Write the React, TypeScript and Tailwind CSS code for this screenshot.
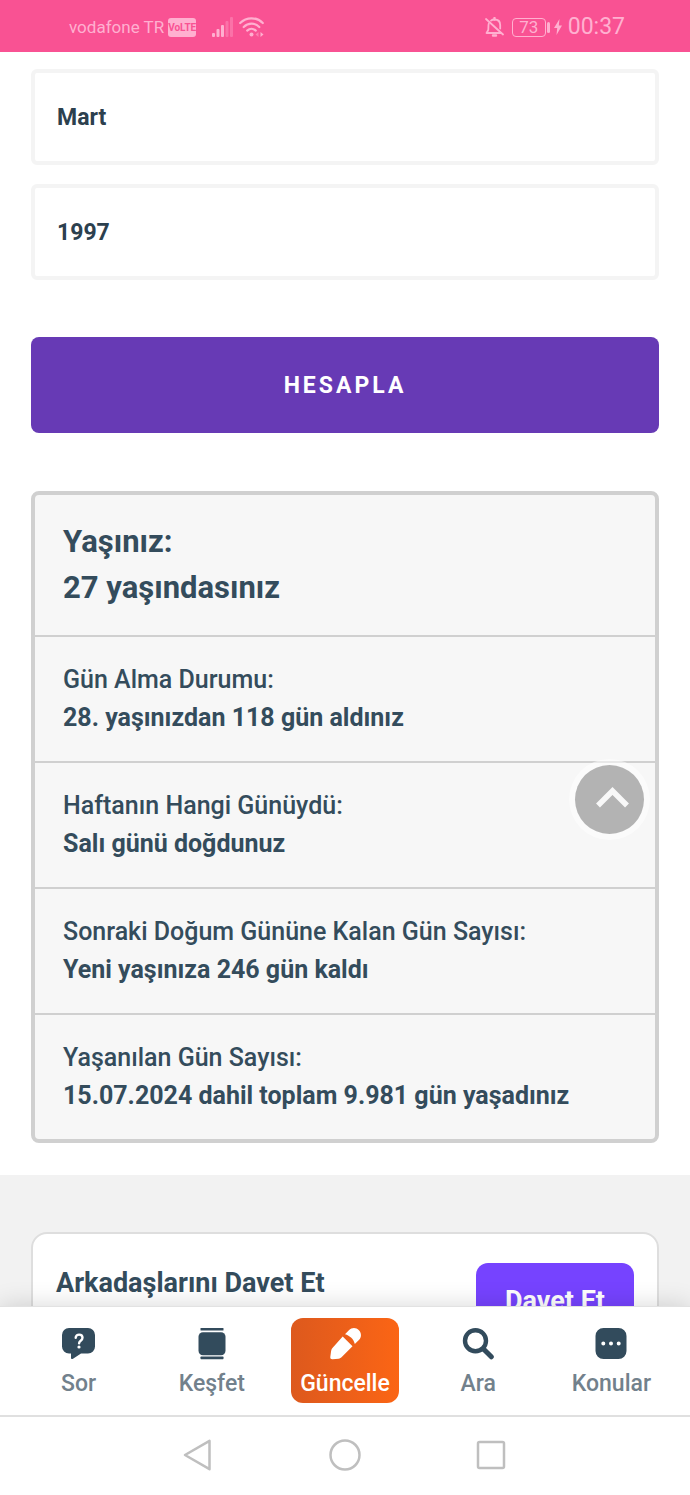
import { ReactNode } from 'react';

const months = ['Ocak', 'Şubat', 'Mart', 'Nisan', 'Mayıs', 'Haziran', 'Temmuz', 'Ağustos', 'Eylül', 'Ekim', 'Kasım', 'Aralık'];
const years = ['1995', '1996', '1997', '1998', '1999'];

const results = [
	{ label: 'Gün Alma Durumu:', value: '28. yaşınızdan 118 gün aldınız' },
	{ label: 'Haftanın Hangi Günüydü:', value: 'Salı günü doğdunuz' },
	{ label: 'Sonraki Doğum Gününe Kalan Gün Sayısı:', value: 'Yeni yaşınıza 246 gün kaldı' },
	{ label: 'Yaşanılan Gün Sayısı:', value: '15.07.2024 dahil toplam 9.981 gün yaşadınız' },
];

function StatusBar() {
	return (
		<header className="flex h-13 shrink-0 items-center justify-between bg-[#f95293] pt-0.5 pl-[69px] pr-[65px] text-[#ffb0d0]">
			<div className="flex items-center">
				<span className="text-[17px] leading-6">vodafone TR</span>
				<span className="ml-1 flex h-[19px] w-7 items-center justify-center rounded-[3px] bg-[#ffb0d0] text-[10px] font-bold text-[#f95293]">
					VoLTE
				</span>
				<svg className="ml-4 h-5 w-[21px]" viewBox="0 0 21 20" fill="currentColor" aria-hidden="true">
					<rect x="0" y="16" width="3" height="4" rx="1" />
					<rect x="4.500" y="12" width="3" height="8" rx="1" />
					<rect x="9" y="8" width="3" height="12" rx="1" />
					<rect x="13.500" y="4" width="3" height="16" rx="1" opacity=".35" />
					<rect x="18" y="0" width="3" height="20" rx="1" opacity=".35" />
				</svg>
				<svg className="ml-1.5 h-5 w-[25px]" viewBox="0 0 25 20" fill="none" stroke="currentColor" strokeWidth="2.200" strokeLinecap="round" aria-hidden="true">
					<path d="M1.200 6C7.500-.3 17.500-.3 23.800 6" />
					<path d="M4.700 10C9.200 5.500 15.800 5.500 20.300 10" />
					<path d="M8.200 13.600c2.600-2.500 6-2.500 8.600 0" />
					<circle cx="12.500" cy="17.500" r="2" fill="currentColor" stroke="none" />
					<path d="M19.500 15v5l-3-2.500z" fill="currentColor" stroke="none" opacity=".5" />
					<path d="M21.500 15v5l3-2.500z" fill="currentColor" stroke="none" />
				</svg>
			</div>
			<div className="flex items-center">
				<svg className="h-5 w-[19px]" viewBox="0 0 19 20" fill="none" stroke="currentColor" strokeWidth="1.800" strokeLinecap="round" strokeLinejoin="round" aria-hidden="true">
					<path d="M1 2l17 15.500" />
					<path d="M3.800 6.500C3 8.500 3.800 12 3 13.600L1.500 16H16" />
					<path d="M6 3.600C7 2.700 8 2.500 9.500 2.500c3.800 0 5.700 2.500 5.700 5.500v3.500" />
					<path d="M9.500 2.500V1M8 18.500h3" strokeWidth="2.400" />
				</svg>
				<span className="ml-2 flex h-[19px] w-[34px] items-center justify-center rounded-[4px] border border-current text-[17px] leading-none">
					73
				</span>
				<span className="ml-px h-[11px] w-[3px] rounded-sm bg-current" />
				<svg className="ml-1 h-4 w-2" viewBox="0 0 8 16" fill="currentColor" aria-hidden="true">
					<path d="M5.500 0L0 9h3.200L2.500 16 8 6.500H4.800z" />
				</svg>
				<span className="ml-1.5 text-[23px] leading-6">00:37</span>
			</div>
		</header>
	);
}

function SelectBox({ label, value, options }: { label: string; value: string; options: string[] }) {
	return (
		<select
			aria-label={label}
			defaultValue={value}
			className="h-24 w-full appearance-none rounded-md border-4 border-[#f4f4f4] bg-white px-[22px] pt-0.5 text-[23px] font-bold text-[#2c404e]"
		>
			{options.map((option) => (
				<option key={option}>{option}</option>
			))}
		</select>
	);
}

function NavItem({ label, active, children }: { label: string; active?: boolean; children: ReactNode }) {
	return (
		<li className="flex flex-1 justify-center">
			<a
				href="#"
				className={
					active
						? 'flex w-27 flex-col items-center rounded-xl bg-linear-to-r from-[#dd591d] to-[#fb6514] pt-2.5 pb-[3px] text-white'
						: 'flex w-27 flex-col items-center pt-2.5 pb-[3px] text-[#324b5c]'
				}
			>
				<svg className="h-8 w-9" viewBox="0 0 36 32" fill="currentColor" aria-hidden="true">
					{children}
				</svg>
				<span className={active ? 'mt-2 text-[23px] leading-8 font-medium' : 'mt-2 text-[23px] leading-8 font-medium text-[#72818c]'}>
					{label}
				</span>
			</a>
		</li>
	);
}

function BottomNav() {
	return (
		<nav className="relative shrink-0 border-t border-[#e2e2e2] bg-white px-3 pt-[11px] pb-3 shadow-[0_0_24px_rgba(0,0,0,0.16)]">
			<ul className="flex">
				<NavItem label="Sor">
					<path d="M8 0h19a7 7 0 0 1 7 7v11.500a7 7 0 0 1-7 7h-7l-8 5.200c-1.200.7-2 .2-2-1v-4.200H8a7 7 0 0 1-7-7V7a7 7 0 0 1 7-7z" />
					<path d="M14.700 9.800c0-4.300 6.800-4.300 6.800 0 0 3-3.400 2.900-3.400 5.400" fill="none" stroke="#fff" strokeWidth="2.400" strokeLinecap="round" />
					<circle cx="18" cy="19" r="1.600" fill="#fff" />
				</NavItem>
				<NavItem label="Keşfet">
					<rect x="6.500" y="0" width="23" height="2.600" rx=".6" />
					<rect x="4.500" y="4.200" width="27" height="23" rx="4.500" />
					<rect x="6.500" y="28.600" width="23" height="2.600" rx=".6" />
				</NavItem>
				<NavItem label="Güncelle" active>
					<path d="M15.700 8.400L25.500 18.200 15 28.700c-1 1-2 1.700-3.400 2l-6 .6c-1.600.1-2.500-.6-2.300-2.200l.8-6.200c.2-1.300.8-2.300 1.800-3.300z" />
					<path d="M18 6.200l3.900-3.900c3.100-3.100 7.300-2.800 10 0 2.600 2.700 2.900 6.700 0 9.800L27.800 16c-.6-2.400-1.800-4.500-3.500-6.200-1.700-1.700-3.800-3-6.300-3.600z" />
				</NavItem>
				<NavItem label="Ara">
					<g fill="none" stroke="currentColor">
						<circle cx="15.500" cy="12.700" r="10.500" strokeWidth="4.400" />
						<path d="M23.500 21l7.800 7.800" strokeWidth="5" strokeLinecap="round" />
					</g>
				</NavItem>
				<NavItem label="Konular">
					<path
						fillRule="evenodd"
						d="M10.500 0h15a8 8 0 0 1 8 8v15a8 8 0 0 1-8 8h-15a8 8 0 0 1-8-8V8a8 8 0 0 1 8-8zM10.300 13.500a2 2 0 1 0 0 4 2 2 0 0 0 0-4zm7.700 0a2 2 0 1 0 0 4 2 2 0 0 0 0-4zm7.700 0a2 2 0 1 0 0 4 2 2 0 0 0 0-4z"
					/>
				</NavItem>
			</ul>
		</nav>
	);
}

function SystemBar() {
	return (
		<footer className="relative flex h-20 shrink-0 items-center justify-center gap-[110px] border-t-2 border-[#e0e0e0] bg-white pb-0.5 text-[#bfbfbf]">
			<button type="button" aria-label="Geri">
				<svg className="size-9" viewBox="0 0 36 36" fill="none" stroke="currentColor" strokeWidth="2.500" strokeLinejoin="round">
					<path d="M28.500 3.800v28.400L4 18z" />
				</svg>
			</button>
			<button type="button" aria-label="Ana ekran">
				<svg className="size-9" viewBox="0 0 36 36" fill="none" stroke="currentColor" strokeWidth="2.500">
					<circle cx="18" cy="18" r="14.500" />
				</svg>
			</button>
			<button type="button" aria-label="Son uygulamalar">
				<svg className="size-9" viewBox="0 0 36 36" fill="none" stroke="currentColor" strokeWidth="2.500">
					<rect x="5" y="5" width="26" height="26" rx="1.500" />
				</svg>
			</button>
		</footer>
	);
}

export default function App() {
	return (
		<div className="flex h-screen flex-col bg-white font-['Roboto',sans-serif] text-[#344c5c]">
			<StatusBar />
			<div className="relative flex min-h-0 flex-1 flex-col">
				<main className="flex-1 overflow-y-auto [scrollbar-width:none]">
					<form className="px-[31px] pt-[17px]">
						<div className="flex flex-col gap-[19px]">
							<SelectBox label="Ay" value="Mart" options={months} />
							<SelectBox label="Yıl" value="1997" options={years} />
						</div>
						<button
							type="button"
							className="mt-[57px] h-24 w-full rounded-lg bg-[#673ab5] pt-0.5 text-[23px] font-bold tracking-[3px] text-white"
						>
							HESAPLA
						</button>
					</form>
					<section className="mx-[31px] mt-[58px] mb-8 divide-y-2 divide-[#d0d0d0] rounded-lg border-4 border-[#d0d0d0] bg-[#f7f7f7]">
						<div className="px-7 py-6 text-[31px] leading-[46px] font-bold">
							<h2>Yaşınız:</h2>
							<p>27 yaşındasınız</p>
						</div>
						{results.map((result) => (
							<div key={result.label} className="px-7 py-6 text-[25px] leading-[38px]">
								<h3 className="font-medium">{result.label}</h3>
								<p className="font-bold">{result.value}</p>
							</div>
						))}
					</section>
					<section className="bg-[#f2f2f2] px-[31px] pt-[57px] pb-14">
						<div className="flex items-start justify-between rounded-2xl border-2 border-[#dedede] bg-white px-[23px] pt-[29px] pb-8">
							<h2 className="text-[27px] leading-10 font-bold">Arkadaşlarını Davet Et</h2>
							<button type="button" className="h-19 rounded-xl bg-[#7643ff] px-[29px] text-[27px] font-bold text-white">
								Davet Et
							</button>
						</div>
					</section>
				</main>
				<button
					type="button"
					aria-label="Yukarı çık"
					className="absolute right-[46px] bottom-[472px] flex size-[69px] items-center justify-center rounded-full bg-[#b3b3b3] ring-6 ring-white/50"
				>
					<svg className="size-[69px]" viewBox="0 0 69 69" fill="none" stroke="#f8f8f8" strokeWidth="5.500" aria-hidden="true">
						<path d="M23 40.500L37.500 26 52 40.500" />
					</svg>
				</button>
			</div>
			<BottomNav />
			<SystemBar />
		</div>
	);
}
